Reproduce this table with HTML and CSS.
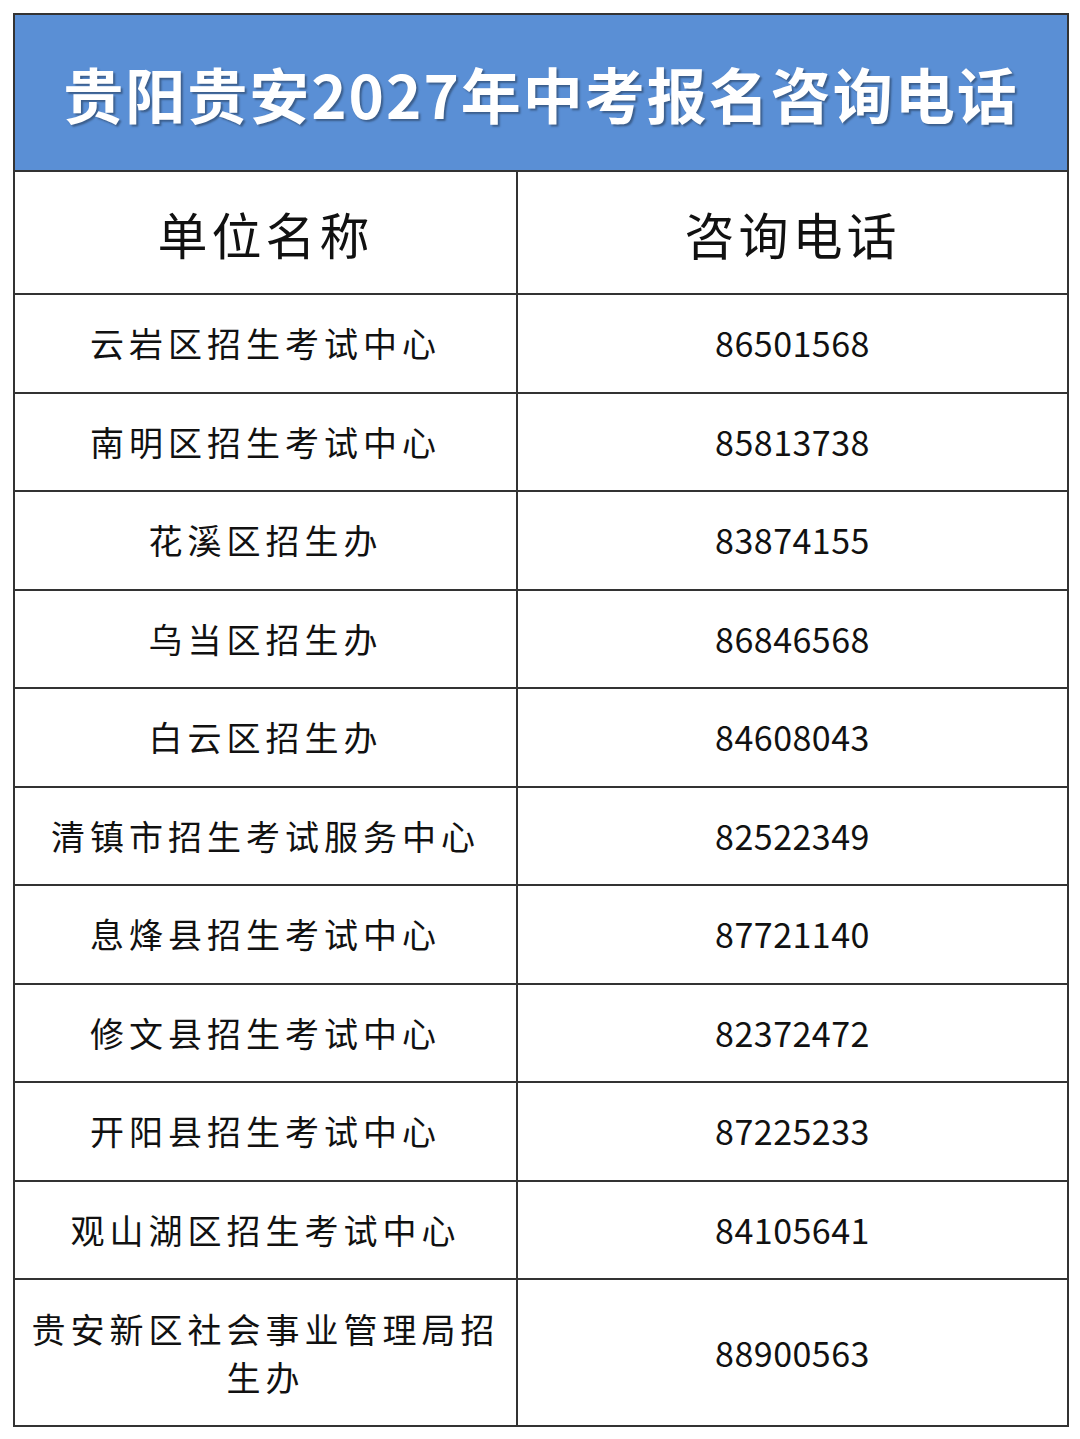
FILE: index.html
```html
<!DOCTYPE html>
<html lang="zh-CN">
<head>
<meta charset="utf-8">
<title>贵阳贵安2027年中考报名咨询电话</title>
<link rel="stylesheet" href="styles.css">
</head>
<body>
<div class="page">
<table class="sheet">
  <colgroup><col class="c-name"><col class="c-tel"></colgroup>
  <tr class="r-title"><th colspan="2" class="title">贵阳贵安2027年中考报名咨询电话</th></tr>
  <tr class="r-head"><th class="head">单位名称</th><th class="head">咨询电话</th></tr>
  <tr class="r-row"><td class="name">云岩区招生考试中心</td><td class="tel">86501568</td></tr>
  <tr class="r-row"><td class="name">南明区招生考试中心</td><td class="tel">85813738</td></tr>
  <tr class="r-row"><td class="name">花溪区招生办</td><td class="tel">83874155</td></tr>
  <tr class="r-row"><td class="name">乌当区招生办</td><td class="tel">86846568</td></tr>
  <tr class="r-row"><td class="name">白云区招生办</td><td class="tel">84608043</td></tr>
  <tr class="r-row"><td class="name">清镇市招生考试服务中心</td><td class="tel">82522349</td></tr>
  <tr class="r-row"><td class="name">息烽县招生考试中心</td><td class="tel">87721140</td></tr>
  <tr class="r-row"><td class="name">修文县招生考试中心</td><td class="tel">82372472</td></tr>
  <tr class="r-row"><td class="name">开阳县招生考试中心</td><td class="tel">87225233</td></tr>
  <tr class="r-row"><td class="name">观山湖区招生考试中心</td><td class="tel">84105641</td></tr>
  <tr class="r-last"><td class="name">贵安新区社会事业管理局招生办</td><td class="tel">88900563</td></tr>
</table>
</div>
</body>
</html>
```

FILE: styles.css
```css
html, body {
  margin: 0;
  padding: 0;
  background: #ffffff;
}
.page {
  padding: 13px 0 0 13px;
}
.sheet {
  width: 1054px;
  border-collapse: collapse;
  table-layout: fixed;
  font-family: "Noto Sans CJK SC", "Noto Sans", sans-serif;
  color: #111111;
}
.c-name { width: 503px; }
.c-tel { width: 551px; }
.sheet th, .sheet td {
  border: 2px solid #333333;
  padding: 0;
  text-align: center;
  vertical-align: middle;
}
.r-title { height: 157px; }
.r-head { height: 123px; }
.r-row { height: 98.5px; }
.r-last { height: 147px; }
.title {
  background: #5a8fd5;
  border-color: #1f3350;
  color: #ffffff;
  font-size: 60px;
  font-weight: 700;
  letter-spacing: 2px;
  line-height: 1;
  padding: 10px 14px 0 0;
  text-shadow: 2px 2px 2px rgba(0, 0, 0, 0.35);
}
.head {
  font-size: 50px;
  font-weight: 400;
  letter-spacing: 4px;
  padding-left: 4px;
  padding-top: 8px;
  line-height: 1;
}
.name {
  font-size: 34px;
  letter-spacing: 5px;
  padding: 8px 8px 0 13px;
  line-height: 48px;
}
.tel {
  font-size: 34px;
  letter-spacing: 0.5px;
  padding: 8px 4px 0 0;
  line-height: 48px;
}
```
